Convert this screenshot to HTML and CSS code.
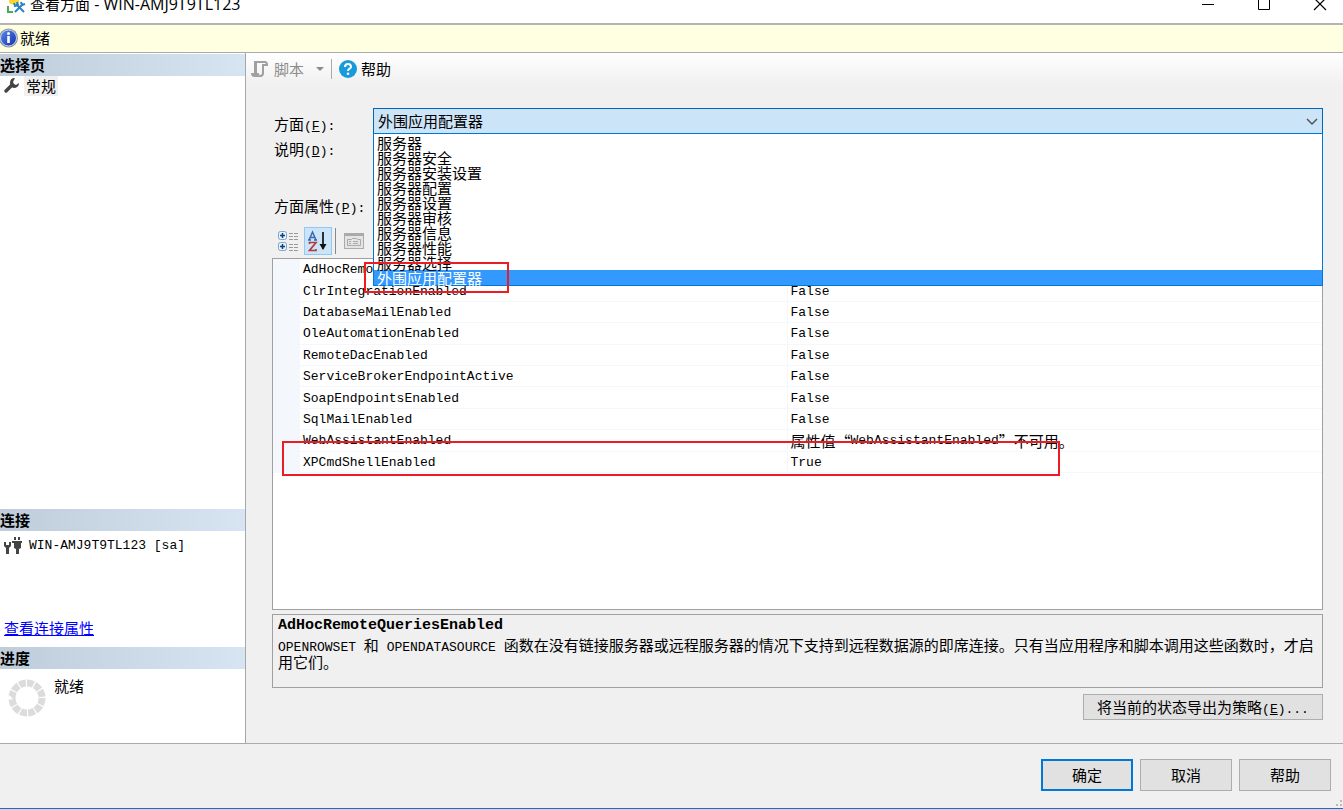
FILE: index.html
```
<!DOCTYPE html>
<html lang="zh-CN">
<head>
<meta charset="utf-8">
<title>查看方面 - WIN-AMJ9T9TL123</title>
<link rel="stylesheet" href="styles.css">
</head>
<body>
<div class="window">
  <header class="titlebar">
    <svg class="app-icon" width="20" height="20" viewBox="0 0 20 20">
      <path d="M3 0h10v9q-5 3-10 0z" fill="#ffd630"/>
      <path d="M2 12v6h5" fill="none" stroke="#48a95b" stroke-width="2"/>
      <path d="M10 10l8 8M17 10l-8 8" stroke="#2b83c6" stroke-width="2"/>
      <path d="M8 9l1 3 3-1-1-3M15 8l1 3 3-1" fill="none" stroke="#2b83c6" stroke-width="2"/>
    </svg>
    <h1 class="title">查看方面<span class="title-latin"> - WIN-AMJ9T9TL123</span></h1>
    <div class="window-buttons">
      <button class="window-button" aria-label="最小化"><svg width="14" height="14"><path d="M1 7.500h12" stroke="#000"/></svg></button>
      <button class="window-button" aria-label="最大化"><svg width="14" height="14"><path d="M1.500 1.500h11v11h-11z" fill="none" stroke="#000"/></svg></button>
      <button class="window-button" aria-label="关闭"><svg width="14" height="14"><path d="M1 1l12 12M13 1L1 13" stroke="#000" stroke-width="1.200"/></svg></button>
    </div>
  </header>

  <div class="status">
    <svg width="20" height="20" viewBox="0 0 20 20">
      <defs><linearGradient id="info" x2="1" y2="1"><stop stop-color="#5b8aef"/><stop offset="1" stop-color="#0d2fae"/></linearGradient></defs>
      <circle cx="8.500" cy="10" r="9.500" fill="#8f949e"/><circle cx="8.500" cy="10" r="8" fill="url(#info)" stroke="#c9d2e8"/>
      <path d="M8.500 8v7" fill="none" stroke="#fff" stroke-width="2.600"/><circle cx="8.500" cy="5.500" r="1.500" fill="#fff"/>
    </svg>
    <span>就绪</span>
  </div>

  <div class="body">
    <aside class="sidebar">
      <section class="pages">
        <h2 class="heading">选择页</h2>
        <a class="page" href="#general">
          <svg width="16" height="16" viewBox="0 0 16 16"><path d="M2 13l6-6" stroke="#444" stroke-width="3.400" stroke-linecap="round"/><path d="M11 0q-5 0-5 5 0 5 5 5 4-1 4-5l-3 2-2-1-1-2z" fill="#444"/></svg>
          <span class="page-name">常规</span>
        </a>
      </section>
      <section class="connection">
        <h2 class="heading">连接</h2>
        <div class="server">
          <svg width="18" height="18" viewBox="0 0 18 18" fill="#444"><path d="M0 6h2v3h3V6h2v4l-2 2v6H2v-6l-2-2zM8 5h10v2h-1v5l-2 1v5h-3v-5l-2-1V7H8zM10 1h2v3h-2zM14 1h2v3h-2z"/></svg>
          <span class="latin">WIN-AMJ9T9TL123 [sa]</span>
        </div>
        <a class="link" href="#connection">查看连接属性</a>
      </section>
      <section class="progress">
        <h2 class="heading">进度</h2>
        <div class="progress-row">
          <svg width="38" height="38" viewBox="0 0 38 38"><circle cx="19" cy="19" r="15" fill="none" stroke="#dcdcdc" stroke-width="7" pathLength="120" stroke-dasharray="8.500 1.500"/></svg>
          <span>就绪</span>
        </div>
      </section>
    </aside>

    <main class="content">
      <div class="toolbar">
        <button class="tool script" disabled>
          <svg width="20" height="20" viewBox="0 0 20 20" fill="none" stroke="#a0a0a0"><path d="M5 3h10q2 0 2 3h-4v8q0 3-3 3" stroke-width="2"/><path d="M5.500 2v12" stroke-width="3"/><path d="M1.500 14.500h7q0 3 3 3H4q-2.500 0-2.500-3z" fill="#a0a0a0"/></svg>
          <span>脚本</span>
          <svg class="arrow" width="8" height="5"><path d="M0 0h8L4 4z" fill="#8c8c8c"/></svg>
        </button>
        <span class="separator"></span>
        <button class="tool">
          <svg width="18" height="18" viewBox="0 0 18 18"><circle cx="9" cy="9" r="9" fill="#179bdc"/><path d="M6 7q0-3 3-3t3 3q0 1-2 2-1 .7-1 2" fill="none" stroke="#fff" stroke-width="2"/><circle cx="9" cy="13.700" r="1.300" fill="#fff"/></svg>
          <span>帮助</span>
        </button>
      </div>

      <div class="form">
        <div class="field">
          <label for="facet">方面<span class="latin">(<u>F</u>):</span></label>
          <div class="combo">
            <select id="facet" class="combo-box"><option>外围应用配置器</option></select>
            <svg class="chevron" width="12" height="8"><path d="M1 1l5 5 5-5" fill="none" stroke="#555" stroke-width="1.500"/></svg>
            <ul class="options" role="listbox" aria-label="方面">
              <li role="option">服务器</li>
              <li role="option">服务器安全</li>
              <li role="option">服务器安装设置</li>
              <li role="option">服务器配置</li>
              <li role="option">服务器设置</li>
              <li role="option">服务器审核</li>
              <li role="option">服务器信息</li>
              <li role="option">服务器性能</li>
              <li role="option">服务器选择</li>
              <li role="option" class="selected" aria-selected="true">外围应用配置器</li>
            </ul>
            <div class="mark mark-option"></div>
          </div>
        </div>
        <div class="caption">说明<span class="latin">(<u>D</u>):</span></div>
        <div class="caption properties-caption">方面属性<span class="latin">(<u>P</u>):</span></div>

        <div class="grid-tools">
          <button class="grid-tool" aria-label="按分类"><svg width="22" height="22" viewBox="0 0 22 22"><g fill="#e8f2fd" stroke="#7ba3cc"><rect x="1.500" y="1.500" width="8" height="8" rx="2"/><rect x="1.500" y="12.500" width="8" height="8" rx="2"/></g><path d="M3 5.500h5M5.500 3v5M3 16.500h5M5.500 14v5" stroke="#123e78" stroke-width="1.500"/><path d="M12 3.500h4m1 0h4M12 6.500h4m1 0h4M12 9.500h4m1 0h4M12 14.500h4m1 0h4M12 17.500h4m1 0h4M12 20.500h4m1 0h4" stroke="#999"/></svg></button>
          <button class="grid-tool active" aria-label="按字母顺序"><svg width="22" height="22" viewBox="0 0 22 22" fill="none"><path d="M2 10l3.500-8L9 10M3 7.500h5M1 10h3M7 10h3" stroke="#3b66b5" stroke-width="1.500"/><path d="M2.500 14v-1.500H9l-6.500 8H9V19" stroke="#b33a42" stroke-width="1.700"/><path d="M16 2v17" stroke="#111" stroke-width="1.700"/><path d="M12.500 14h7L16 20z" fill="#111"/></svg></button>
          <span class="separator"></span>
          <button class="grid-tool" aria-label="属性页" disabled><svg width="22" height="22" viewBox="0 0 22 22" fill="none" stroke="#aaa"><rect x="1.500" y="3.500" width="19" height="15" fill="#e4e4e4"/><path d="M2 5h18" stroke-width="2"/><path d="M4.500 15.500v-6h4l1-1h4l1 1h3v6zM6 11.500h2m2 0h5M6 13.500h2m2 0h5"/></svg></button>
        </div>

        <div class="grid">
          <table class="properties">
            <tbody>
              <tr><td class="gutter"></td><td class="name">AdHocRemoteQueriesEnabled</td><td>False</td></tr>
              <tr><td class="gutter"></td><td class="name">ClrIntegrationEnabled</td><td>False</td></tr>
              <tr><td class="gutter"></td><td class="name">DatabaseMailEnabled</td><td>False</td></tr>
              <tr><td class="gutter"></td><td class="name">OleAutomationEnabled</td><td>False</td></tr>
              <tr><td class="gutter"></td><td class="name">RemoteDacEnabled</td><td>False</td></tr>
              <tr><td class="gutter"></td><td class="name">ServiceBrokerEndpointActive</td><td>False</td></tr>
              <tr><td class="gutter"></td><td class="name">SoapEndpointsEnabled</td><td>False</td></tr>
              <tr><td class="gutter"></td><td class="name">SqlMailEnabled</td><td>False</td></tr>
              <tr><td class="gutter"></td><td class="name">WebAssistantEnabled</td><td><span class="han">属性值“</span>WebAssistantEnabled<span class="han">”不可用。</span></td></tr>
              <tr><td class="gutter"></td><td class="name">XPCmdShellEnabled</td><td>True</td></tr>
            </tbody>
          </table>
          <div class="mark mark-row"></div>
        </div>

        <div class="description">
          <h3 class="description-title">AdHocRemoteQueriesEnabled</h3>
          <p class="description-text"><span class="latin">OPENROWSET </span>和<span class="latin"> OPENDATASOURCE </span>函数在没有链接服务器或远程服务器的情况下支持到远程数据源的即席连接。只有当应用程序和脚本调用这些函数时，才启用它们。</p>
        </div>
        <button class="button export">将当前的状态导出为策略<span class="latin">(<u>E</u>)...</span></button>
      </div>
    </main>
  </div>

  <footer class="footer">
    <button class="button default">确定</button>
    <button class="button">取消</button>
    <button class="button">帮助</button>
    <svg class="grip" width="8" height="8" fill="#bbb"><path d="M5 0h2v2H5zM5 4h2v2H5zM1 4h2v2H1z"/></svg>
  </footer>
</div>
</body>
</html>
```
FILE: styles.css
```
* { box-sizing: border-box; }

body {
  margin: 0;
  font: 15px/20px "Noto Sans CJK SC", sans-serif;
  color: #000;
  background: #f0f0f0;
}

h1, h2, h3, p, ul { margin: 0; padding: 0; }

button {
  margin: 0;
  padding: 0;
  border: 0;
  background: none;
  font: inherit;
  color: inherit;
}

svg { display: block; flex: none; }

.latin {
  font-family: "Liberation Mono", monospace;
  font-size: 13px;
  line-height: 1;
  white-space: pre-wrap;
}
.han { font-family: "Noto Sans CJK SC", sans-serif; font-size: 15px; line-height: 1; }

.window {
  display: flex;
  flex-direction: column;
  min-height: 100vh;
  overflow: hidden;
  border-bottom: 1px solid #0078d7;
}

/* Title bar */
.titlebar {
  display: flex;
  align-items: center;
  height: 31px;
  margin-top: -8px;
  padding: 0 8px 8px 6px;
  background: #fff;
}
.title { flex: 1; margin-left: 4px; font-size: 15px; line-height: 22px; font-weight: 400; }
.title-latin { font-family: "Open Sans", sans-serif; font-size: 16px; line-height: 1; }
.window-buttons { display: flex; gap: 42px; padding-right: 8px; }

.status {
  display: flex;
  align-items: center;
  height: 30px;
  padding-bottom: 1px;
  border-top: 2px solid #b4b4b4;
  border-bottom: 1px solid #a9a9b0;
  background: #ffffe1;
}

.body { display: flex; flex: 1; }

/* Sidebar */
.sidebar {
  display: flex;
  flex-direction: column;
  flex: none;
  width: 246px;
  padding-top: 1px;
  border-right: 1px solid #a6a6ac;
  background: #fff;
}
.pages { flex: 1; }
.heading {
  height: 22px;
  font-size: 15px;
  line-height: 22px;
  font-weight: 700;
  background: linear-gradient(90deg, #bfcddb, #d7e4f2);
}
.page { display: flex; align-items: center; gap: 4px; padding: 0 4px; color: inherit; text-decoration: none; }
.page-name { padding: 0 2px; background: #f0f0f0; }
.connection { height: 138px; }
.server { display: flex; align-items: center; gap: 7px; height: 28px; padding-left: 4px; }
.link { display: block; margin: 59px 4px 0; color: #00f; }
.progress { height: 96px; }
.progress-row { display: flex; gap: 8px; padding: 7px 8px; }
.progress-row svg { margin-top: 3px; }

/* Content */
.content { flex: 1; min-width: 0; background: #f0f0f0; }
.toolbar {
  display: flex;
  align-items: center;
  gap: 7px;
  height: 32px;
  padding-left: 4px;
  background: linear-gradient(#fff, #f0f0f0);
}
.tool { display: flex; align-items: center; gap: 4px; }
.script { color: #8c8c8c; }
.arrow { margin: 0 0 0 8px; }
.separator { width: 1px; height: 20px; background: #aaa; }

.form { display: flex; flex-direction: column; padding: 23px 20px 0 26px; }
.field { display: flex; align-items: flex-end; }
.field label { width: 101px; height: 20px; padding-left: 2px; }
.caption { height: 20px; padding-left: 2px; margin-top: 5px; }
.properties-caption { margin-top: 37px; }

.combo { position: relative; flex: 1; height: 26px; }
.combo-box {
  display: block;
  width: 100%;
  height: 26px;
  padding: 0 24px 0 4px;
  border: 1px solid #0067b8;
  border-radius: 0;
  background: #cce4f7;
  color: #000;
  font: inherit;
  appearance: none;
}
.chevron { position: absolute; right: 5px; top: 10px; }
.options {
  position: absolute;
  z-index: 2;
  top: 25px;
  left: 0;
  right: 0;
  padding-top: 1px;
  border: 1px solid #0078d7;
  background: #fff;
  list-style: none;
  line-height: 15px;
}
.options li { padding-left: 3px; }
.options .selected { background: #3399ff; color: #fff; }

.mark { position: absolute; z-index: 3; border: 2px solid #ec1c24; pointer-events: none; }
.mark-option { left: -9px; top: 154px; width: 145px; height: 31px; }
.mark-row { left: 9px; top: 182px; width: 778px; height: 35px; }

.grid-tools { display: flex; align-items: center; gap: 3px; height: 28px; margin: 11px 0 3px; padding-left: 3px; }
.grid-tool { display: grid; place-items: center; width: 26px; height: 26px; }
.active { width: 28px; height: 28px; border: 1px solid #90c8f6; background: #cce4f7; }
.grid-tools .separator { height: 26px; margin-right: 2px; background: #888; }

.grid { position: relative; height: 352px; border: 1px solid #a0a0a0; background: #fff; }
.properties {
  width: 100%;
  height: 214px;
  border-collapse: collapse;
  table-layout: fixed;
  font: 13px/18px "Liberation Mono", monospace;
}
.properties td { padding: 2px 0 0 3px; border-bottom: 1px solid #f4f7fc; line-height: 18px; }
.properties .han { vertical-align: middle; }
.properties .gutter { width: 27px; background: #f4f7fc; }
.properties .name { width: 487px; border-right: 1px solid #f4f7fc; }

.description { min-height: 74px; margin-top: 4px; padding: 1px 5px; border: 1px solid #a0a0a0; }
.description-title { font: 700 15px/20px "Liberation Mono", monospace; }
.description-text { line-height: 16px; padding-top: 1px; }

.button { height: 32px; border: 1px solid #adadad; background: #e1e1e1; }
.export { align-self: flex-end; width: 240px; height: 26px; margin: 6px 0 22px; line-height: 20px; }

.footer {
  position: relative;
  display: flex;
  justify-content: flex-end;
  gap: 7px;
  height: 65px;
  padding: 15px 12px 0;
  border-top: 1px solid #a9a9b0;
  background: #f0f0f0;
}
.footer .button { width: 92px; }
.footer .default { border: 2px solid #0078d7; }
.grip { position: absolute; right: 0; bottom: 0; }
```
